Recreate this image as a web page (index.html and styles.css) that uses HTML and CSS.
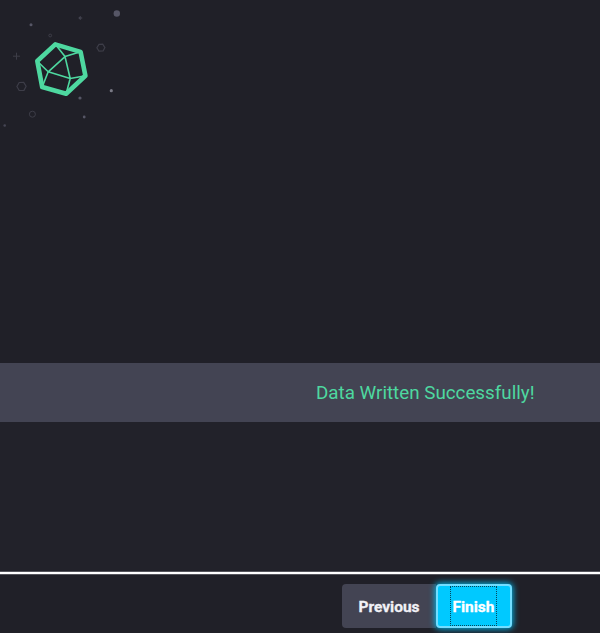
FILE: index.html
```html
<!DOCTYPE html>
<html lang="en">
<head>
<meta charset="utf-8">
<title>Data Loader</title>
<link rel="stylesheet" href="styles.css">
</head>
<body>
<div class="wizard">
  <header class="header">
    <svg class="logo" width="130" height="135" viewBox="0 0 130 135" fill="none">
      <g stroke="#4ed8a0" stroke-linejoin="round">
        <path stroke-width="4.6" d="M55.3 44.4 80.6 51.9 85.4 75.8 66.1 93.8 42.2 87 37.3 61Z"/>
        <path stroke-width="1.6" d="M65 56.6 48.2 71.8 70.2 78.5ZM55.3 44.2 65 56.6 80.6 51.8M37.1 61 48.2 71.8 42.2 87M85.6 75.8 70.2 78.5 66.1 94"/>
      </g>
      <g fill="#565666">
        <circle cx="116.8" cy="13.5" r="3.2"/>
        <circle cx="31" cy="24.7" r="1.5"/>
        <circle cx="80.2" cy="18" r="1.2"/>
        <circle cx="80" cy="98" r="1.6"/>
        <circle cx="84.2" cy="117" r="1.4"/>
        <circle cx="4.7" cy="125.5" r="1.3" opacity=".7"/>
      </g>
      <circle cx="111.3" cy="90.7" r="1.6" fill="#797985"/>
      <g stroke="#3d3d48">
        <path d="M16.5 52.7v7M13 56.2h7M80.3 16v4M78.3 18h4"/>
        <circle cx="50.2" cy="35.5" r="1.4"/>
        <path stroke-width="1.2" d="m99 44.4 3.7-.2 2.2 3.4-1.8 3.4-4.1.2-2.1-3.5Z"/>
        <path stroke-width="1.2" d="m19.2 82.5 4.5-.1 2.4 3.9-2.1 4-4.8.2-2.3-4Z"/>
        <circle cx="32.4" cy="114.2" r="3"/>
      </g>
    </svg>
  </header>
  <div class="status">Data Written Successfully!</div>
  <main class="content"></main>
  <footer class="footer">
    <button class="button previous">Previous</button>
    <button class="button finish"><span class="focus">Finish</span></button>
  </footer>
</div>
</body>
</html>
```
FILE: styles.css
```css
* { box-sizing: border-box; }
body {
  margin: 0;
  background: #202028;
  font-family: Roboto, sans-serif;
}
.wizard {
  display: flex;
  flex-direction: column;
  height: 633px;
  overflow: hidden;
}
.header { height: 363px; }
.logo { display: block; }
.status {
  height: 59px;
  padding-left: 316px;
  background: #434453;
  color: #4ed8a0;
  font-size: 18.8px;
  line-height: 61px;
  white-space: nowrap;
}
.content {
  flex: 1;
  background: #22222a;
  border-bottom: 1px solid #55555c;
}
.footer {
  display: flex;
  height: 61px;
  padding: 10px 0 0 342px;
  border-top: 2px solid #fff;
  box-shadow: inset 0 1px #55555c;
}
.button {
  display: flex;
  align-items: center;
  justify-content: center;
  height: 44px;
  padding: 0;
  border: 0;
  border-radius: 4px;
  color: #fff;
  font: 700 15.5px Roboto, sans-serif;
  -webkit-text-stroke: 0.3px currentColor;
}
.previous {
  width: 94px;
  padding-top: 2px;
  border-radius: 4px 0 0 4px;
  background: #434453;
  color: #f1f1f6;
}
.finish {
  width: 76px;
  padding-right: 1px;
  border: 2px solid #72ddff;
  background: #00c9ff;
  box-shadow: 0 0 6px 1px #00b4e8;
}
.focus {
  display: flex;
  align-items: center;
  justify-content: center;
  width: 47px;
  height: 40px;
  padding-top: 2px;
  border: 1px dotted #06465c;
}
```
